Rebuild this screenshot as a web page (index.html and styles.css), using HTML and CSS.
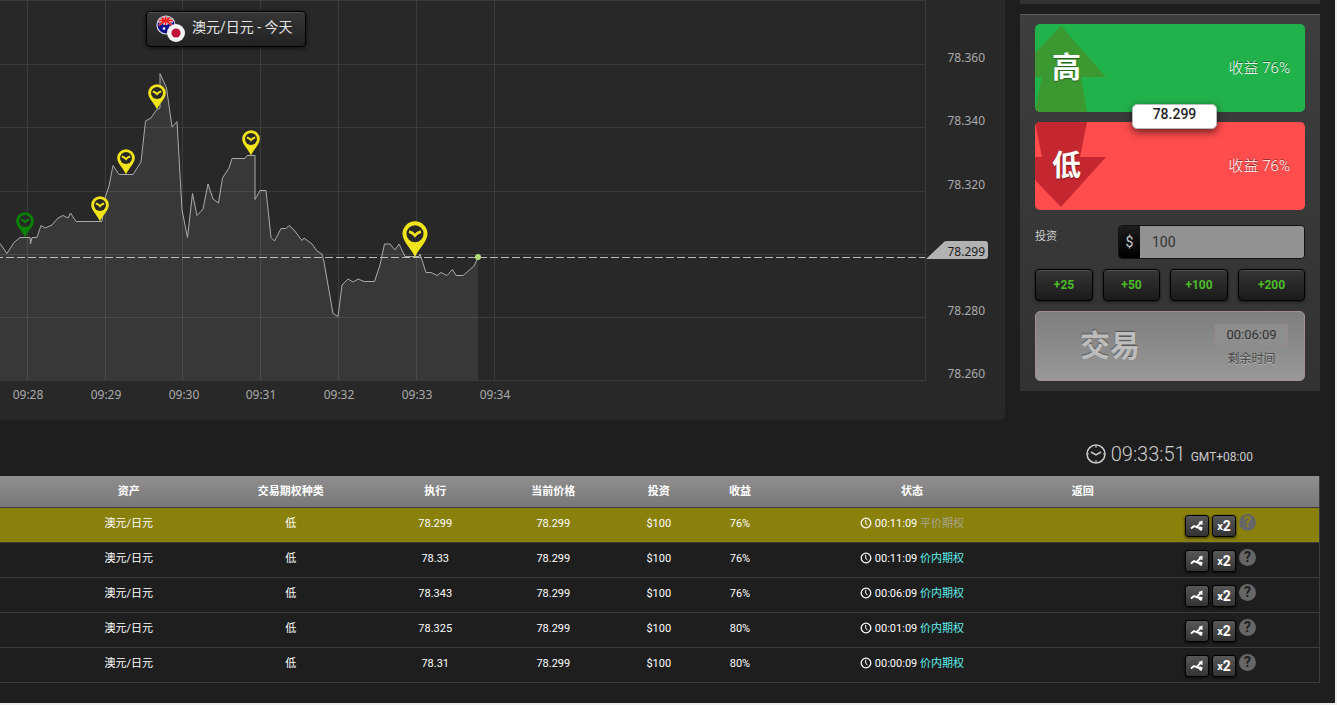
FILE: index.html
```html
<!DOCTYPE html>
<html lang="zh-CN">
<head>
<meta charset="utf-8">
<title>澳元/日元 - 今天</title>
<link rel="stylesheet" href="styles.css">
</head>
<body>
<svg class="sprites" aria-hidden="true">
  <symbol id="pin" viewBox="0 0 18 26">
    <path d="M9 25.500C7 20 .2 14.600 .2 9A8.800 8.800 0 0 1 17.800 9C17.800 14.600 11 20 9 25.500Z" fill="currentColor"/>
    <circle cx="9" cy="9" r="6" fill="#282828"/>
    <path d="M4.800 7.500Q7.300 8 9 10.200Q10.700 8 13.200 7.500" fill="none" stroke="currentColor" stroke-width="1.900"/>
  </symbol>
  <symbol id="clock" viewBox="0 0 12 12">
    <circle cx="6" cy="6" r="4.800" fill="none" stroke="currentColor" stroke-width="1.300"/>
    <path d="M5.700 2.800V6L7.300 8.200" fill="none" stroke="currentColor"/>
  </symbol>
  <symbol id="roll" viewBox="0 0 14 14">
    <path d="M1 9.500L4 7L6.500 8.200L10.500 4.200M6.500 8.200L10.500 9.500" fill="none" stroke="currentColor" stroke-width="1.900"/>
    <path d="M8.500 3L12.500 1.500L12.500 6L11 5.500ZM9.500 7.300L12.800 8.500L11.500 12L9 10.800Z" fill="currentColor"/>
  </symbol>
</svg>
<div class="page">
  <main class="top">
    <section class="chart">
      <svg class="plot" viewBox="0 0 1005 420" preserveAspectRatio="xMaxYMin slice" role="img" aria-label="澳元/日元">
        <path class="grid" d="M0 .5H925M0 64.500H925M0 127.500H925M0 191.500H925M0 254.500H925M0 317.500H925M0 380.500H925M27.500 0V380M105.500 0V380M182.500 0V380M260.500 0V380M338.500 0V380M416.500 0V380M494.500 0V380M925.500 0V381"/>
        <path class="area" d="M0 244L7 253L14 242L20 238H37L41 226L45 228L52 225L58 218L63 216L68 218L71 213L76 222H102L105 198L109 186L113 166L119 174H133L141 162L146 121L151 118L156 110L160 108V74L167 90L172 127L177 121L182 210L187 237L192 194L197 215L203 209L208 184L213 199L218 203L222 178L229 168L232 159H245L247 155H255V199L260 190H266L271 237L274 241L281 228H286L289 225L294 230L302 240L304 238L312 244L317 251L322 254L324 262L333 313L338 317L342 285L348 279L353 282L358 279L364 282H374L380 265L384 244H390L395 250L399 244L405 256H419L420 254L426 272L431 273L437 276L441 273L447 276L452 269L456 276H463L474 266L478 257V380H0Z"/>
        <path class="line" d="M0 243.500L7 253.500L14 242.500L20 237.500H30L30.500 244L32 237.500H37L41 225.500L45 228L52 225L58 218L63 215.500L68 218L70.500 213L76 221.500H102L105 198L109 186L113 165.500L119 174.500H133L141 162L145.500 121L151 118L156 110.500L160 108V73.500L166.500 88L172 127L177 121.500L182 210L187.500 237.500L192.500 193.500L197 215.500L203 209L208 184L213 199L218.500 203L222.500 178L229 168L232 158.500H245L247 155.500H255V199.500L260 190.500H266L271 237.500L274.500 241L281 228.500H286L289 225.500L294 230L302 240.500L304 238L312 244L317 251L322 254L324 262L333 313.500L338 316.500L342 285L348 279L353 282L358 279L364 281.500H374.500L380 265L384.500 244H390L395 250L399 244L405 256.500H419L420 254L426 272.500H431L437 275.500L441 272.500L447 275.500L452.500 269.500L456 275.500H463L474 266L478 257.500"/>
        <path class="spot" d="M0 257.500H925"/>
        <circle cx="478" cy="257" r="3" fill="#b0dc74"/>
        <path d="M926 259L943 243Q944 241 947 241H985Q988 241 988 244V256Q988 259 985 259Z" fill="#b2b2b2"/>
        <g class="pin-green"><use href="#pin" x="16" y="212" width="18" height="26"/></g>
        <g class="pin-yellow">
          <use href="#pin" x="91" y="196" width="18" height="26"/>
          <use href="#pin" x="117" y="149" width="18" height="26"/>
          <use href="#pin" x="148" y="84" width="18" height="26"/>
          <use href="#pin" x="242" y="130" width="18" height="26"/>
          <use href="#pin" x="402" y="221" width="26" height="37"/>
        </g>
        <g class="axis">
          <text x="985" y="62">78.360</text><text x="985" y="125">78.340</text><text x="985" y="189">78.320</text>
          <text x="985" y="315">78.280</text><text x="985" y="378">78.260</text>
          <text class="now" x="985" y="256">78.299</text>
        </g>
        <g class="times">
          <text x="28" y="399">09:28</text><text x="106" y="399">09:29</text><text x="184" y="399">09:30</text>
          <text x="261" y="399">09:31</text><text x="339" y="399">09:32</text><text x="417" y="399">09:33</text><text x="495" y="399">09:34</text>
        </g>
      </svg>
      <button class="asset" type="button">
        <svg class="flags" width="30" height="28" viewBox="0 0 30 28" aria-hidden="true">
          <clipPath id="au"><circle cx="10" cy="10" r="8.500"/></clipPath>
          <circle cx="10" cy="10" r="9.600" fill="#e8e8f0"/>
          <g clip-path="url(#au)">
            <path fill="#10108a" d="M0 0H20V20H0Z"/>
            <path d="M3 1L16 10M16 1L3 10" stroke="#fff" stroke-width="2"/>
            <path d="M9.500 0V10M0 5.500H17" stroke="#fff" stroke-width="4"/>
            <path d="M9.500 0V10M0 5.500H17M3 1L16 10M16 1L3 10" stroke="#f0241c" stroke-width="1.800"/>
          </g>
          <circle cx="8" cy="13.500" r="1.300" fill="#fff"/><circle cx="14" cy="12" r=".8" fill="#fff"/>
          <circle cx="20" cy="18" r="9" fill="#f4f4f4"/>
          <circle cx="20" cy="18" r="4.600" fill="#c0103a"/>
        </svg>
        <span>澳元/日元 - 今天</span>
      </button>
    </section>
    <aside class="side">
      <div class="strip"></div>
      <form class="panel">
        <div class="choices">
          <button class="choice high" type="button">
            <svg class="arrow" viewBox="0 0 72 88" width="72" height="88" aria-hidden="true"><path d="M0 29L26 2L71 53H46L52 88H0L7 53H0Z" fill="#3c9830"/><path d="M0 54H6L0 86Z" fill="#22b24c"/></svg>
            <strong>高</strong><span>收益 76%</span>
          </button>
          <button class="choice low" type="button">
            <svg class="arrow" viewBox="0 0 72 88" width="72" height="88" aria-hidden="true"><path d="M0 58L26 85L71 35H45L52 0H0L7 35H0Z" fill="#c42730"/><path d="M0 34H6L0 2Z" fill="#ff4d4d"/></svg>
            <strong>低</strong><span>收益 76%</span>
          </button>
          <output class="price">78.299</output>
        </div>
        <div class="invest">
          <label for="amount">投资</label>
          <div class="money"><span>$</span><input id="amount" type="text" value="100"></div>
        </div>
        <div class="adds">
          <button type="button">+25</button><button type="button">+50</button><button type="button">+100</button><button type="button">+200</button>
        </div>
        <button class="trade" type="button">
          <strong>交易</strong>
          <span class="left"><span class="timer">00:06:09</span><span class="caption">剩余时间</span></span>
        </button>
      </form>
    </aside>
  </main>
  <div class="clockbar">
    <svg width="20" height="20" viewBox="0 0 20 20" aria-hidden="true"><g fill="none" stroke="#ccc"><circle cx="10" cy="10" r="9" stroke-width="1.500"/><path d="M5 8L10 11L15 8" stroke-width="1.500"/><path d="M10 1.500V4M10 16V18.500M1.500 10H3M17 10H18.500"/></g></svg>
    <time>09:33:51</time><small>GMT+08:00</small>
  </div>
  <table class="trades">
    <colgroup><col class="c-asset"><col class="c-type"><col class="c-strike"><col class="c-now"><col class="c-stake"><col class="c-gain"><col class="c-state"><col class="c-back"><col></colgroup>
    <thead><tr><th class="first">资产</th><th>交易期权种类</th><th>执行</th><th>当前价格</th><th>投资</th><th>收益</th><th>状态</th><th>返回</th><th></th></tr></thead>
    <tbody>
      <tr class="active"><td class="first">澳元/日元</td><td>低</td><td>78.299</td><td>78.299</td><td>$100</td><td>76%</td><td><svg class="mini"><use href="#clock"/></svg> 00:11:09 <span class="even">平价期权</span></td><td></td><td class="tools"><div><button type="button" aria-label="延期"><svg><use href="#roll"/></svg></button><button type="button"><small>x</small>2</button><a href="#">?</a></div></td></tr>
      <tr><td class="first">澳元/日元</td><td>低</td><td>78.33</td><td>78.299</td><td>$100</td><td>76%</td><td><svg class="mini"><use href="#clock"/></svg> 00:11:09 <span class="win">价内期权</span></td><td></td><td class="tools"><div><button type="button" aria-label="延期"><svg><use href="#roll"/></svg></button><button type="button"><small>x</small>2</button><a href="#">?</a></div></td></tr>
      <tr><td class="first">澳元/日元</td><td>低</td><td>78.343</td><td>78.299</td><td>$100</td><td>76%</td><td><svg class="mini"><use href="#clock"/></svg> 00:06:09 <span class="win">价内期权</span></td><td></td><td class="tools"><div><button type="button" aria-label="延期"><svg><use href="#roll"/></svg></button><button type="button"><small>x</small>2</button><a href="#">?</a></div></td></tr>
      <tr><td class="first">澳元/日元</td><td>低</td><td>78.325</td><td>78.299</td><td>$100</td><td>80%</td><td><svg class="mini"><use href="#clock"/></svg> 00:01:09 <span class="win">价内期权</span></td><td></td><td class="tools"><div><button type="button" aria-label="延期"><svg><use href="#roll"/></svg></button><button type="button"><small>x</small>2</button><a href="#">?</a></div></td></tr>
      <tr><td class="first">澳元/日元</td><td>低</td><td>78.31</td><td>78.299</td><td>$100</td><td>80%</td><td><svg class="mini"><use href="#clock"/></svg> 00:00:09 <span class="win">价内期权</span></td><td></td><td class="tools"><div><button type="button" aria-label="延期"><svg><use href="#roll"/></svg></button><button type="button"><small>x</small>2</button><a href="#">?</a></div></td></tr>
    </tbody>
  </table>
</div>
</body>
</html>
```
FILE: styles.css
```css
* { box-sizing: border-box; }
html { background: #eee; }
body { margin: 0 2px 0 0; font-family: Roboto, "Noto Sans CJK SC", sans-serif; font-size: 11px; color: #fff; }
button, input { font-family: inherit; margin: 0; padding: 0; border: 0; color: inherit; }
button { cursor: pointer; }
.sprites { display: none; }
.page { background: #1e1e1e; padding: 0 15px 20px 0; }

.top { display: grid; grid-template-columns: 1fr 300px; column-gap: 15px; align-items: start; }
.chart { position: relative; background: #282828; border-radius: 0 0 6px 0; overflow: hidden; }
.plot { display: block; width: 100%; height: 420px; }
.grid { fill: none; stroke: #3c3c3c; }
.area { fill: #fff; fill-opacity: .08; }
.line { fill: none; stroke: #aaa; }
.spot { fill: none; stroke: #bbb; stroke-dasharray: 8 3; stroke-dashoffset: 5; }
.pin-green { color: #078207; }
.pin-yellow { color: #f2e41a; }
.axis, .times { font-family: "Noto Sans", sans-serif; font-size: 12px; fill: #aaa; }
.axis { text-anchor: end; }
.times { text-anchor: middle; }
.now { fill: #1e1e1e; }

.asset { position: absolute; left: 146px; top: 11px; display: flex; align-items: center; gap: 6px; height: 36px; padding: 0 12px 0 9px; border: 1px solid #000; border-radius: 4px; background: linear-gradient(#363636, #222); box-shadow: inset 0 1px 0 #505050, 0 1px 4px rgba(0, 0, 0, .7); font-size: 14px; line-height: 20px; color: #e6e6e6; }
.asset span { padding-bottom: 5px; }

.strip { height: 4px; margin-bottom: 10px; background: #333; }
.panel { display: grid; gap: 10px; padding: 9px 15px 10px; border-top: 1px solid #5a5a5a; background: linear-gradient(#3e3e3e, #323232); }
.choices { position: relative; display: grid; gap: 10px; margin-bottom: 5px; }
.choice { position: relative; display: flex; align-items: center; justify-content: space-between; height: 88px; padding: 0 15px 0 17px; border-radius: 5px; overflow: hidden; }
.high { background: #22b24c; }
.low { background: #ff4d4d; }
.arrow { position: absolute; left: 0; top: 0; }
.choice strong { position: relative; font-size: 29px; line-height: 40px; text-shadow: 0 1px 1px rgba(0, 0, 0, .4); }
.choice span { font-size: 15px; font-weight: 300; line-height: 20px; text-shadow: 0 -1px 0 rgba(0, 0, 0, .5); }
.price { position: absolute; left: 97px; top: 80px; width: 85px; height: 25px; border: 1px solid #bbb; border-radius: 5px; background: #fff; box-shadow: 0 3px 8px rgba(0, 0, 0, .6); color: #1e1e1e; font-size: 14px; font-weight: 500; line-height: 18px; text-align: center; }

.invest { display: flex; justify-content: space-between; }
.invest label { padding-top: 4px; line-height: 16px; color: #ccc; }
.money { display: flex; width: 187px; height: 34px; border: 1px solid #111; border-radius: 4px; overflow: hidden; }
.money span { width: 21px; background: linear-gradient(#1c1c1c, #000); color: #ccc; font-size: 14px; line-height: 32px; text-align: center; }
.money input { flex: 1; min-width: 0; padding-left: 12px; background: #929292; color: #333; font-size: 14px; }
.adds { display: grid; grid-template-columns: 58fr 57fr 58fr 67fr; gap: 10px; }
.adds button { height: 32px; border: 1px solid #000; border-radius: 4px; background: linear-gradient(#353535, #1a1a1a); box-shadow: inset 0 1px 0 #505050, 0 1px 3px rgba(0, 0, 0, .6); color: #4cbc28; font-size: 12px; font-weight: 700; }
.trade { display: flex; align-items: center; justify-content: space-between; height: 70px; padding: 0 16px 0 44px; border: 1px solid #a0908c; border-radius: 5px; background: linear-gradient(#7e7e7e, #989898); }
.trade strong { font-size: 30px; line-height: 40px; color: #bdbdbd; text-shadow: 0 -1px 1px #555; }
.left { display: grid; gap: 3px; width: 73px; text-align: center; line-height: 20px; }
.timer { border: 1px solid #95898a; background: #8e8e8e; font-size: 13px; color: #333; }
.caption { font-size: 12px; color: #444; text-shadow: 0 1px 0 #bbb; }

.clockbar { display: flex; align-items: center; justify-content: flex-end; gap: 5px; height: 56px; padding: 12px 67px 0 0; color: #ccc; }
.clockbar time { font-size: 20px; font-weight: 300; line-height: 24px; }
.clockbar small { padding-top: 5px; font-size: 12px; line-height: 16px; }

.trades { width: 100%; table-layout: fixed; border-collapse: separate; border-spacing: 0; border-right: 1px solid #3c3c3c; text-align: center; line-height: 16px; }
.c-asset { width: 16.5%; }
.c-type { width: 11.1%; }
.c-strike { width: 10.8%; }
.c-now { width: 7.1%; }
.c-stake { width: 8.9%; }
.c-gain { width: 3.4%; }
.c-state { width: 22.7%; }
.c-back { width: 3.2%; }
.trades thead { background: linear-gradient(#908e8f, #787878); }
.trades th { height: 32px; padding: 0; border-bottom: 1px solid #3c3c3c; font-weight: 700; white-space: nowrap; }
.trades td { height: 35px; padding: 8px 0 0; border-bottom: 1px solid #3c3c3c; vertical-align: top; white-space: nowrap; }
.trades .first { padding-left: 40px; }
.active { background: #8a800c; }
.mini { width: 12px; height: 12px; vertical-align: -2px; }
.even { color: #a8a48e; }
.win { color: #5cf0ec; }
.trades .tools { padding-top: 6px; }
.tools div { display: flex; gap: 3px; padding-left: 81px; }
.tools button { display: flex; align-items: center; justify-content: center; width: 24px; height: 22px; margin-top: 1px; border: 1px solid #000; border-radius: 3px; background: linear-gradient(#585858, #333); box-shadow: 0 1px 3px rgba(0, 0, 0, .7); font-size: 14px; font-weight: 700; line-height: 16px; }
.tools button svg { width: 14px; height: 14px; }
.tools button small { padding-top: 1px; font-size: 11px; }
.tools a { width: 17px; height: 17px; border-radius: 50%; background: #666; color: #1e1e1e; font-size: 14px; font-weight: 700; line-height: 17px; text-decoration: none; }
.active .tools a { color: #8a800c; }
```
